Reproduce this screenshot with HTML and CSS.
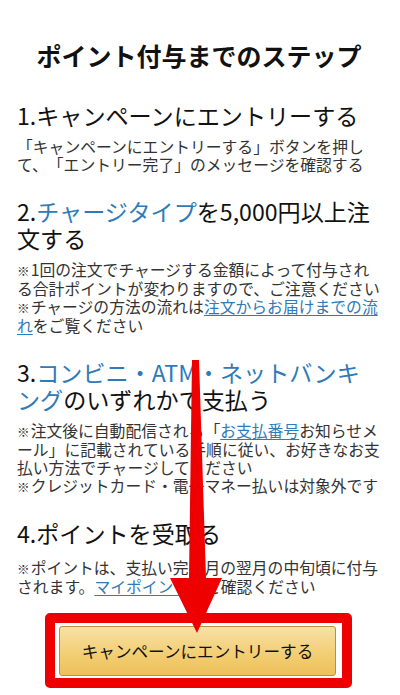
FILE: index.html
```html
<!DOCTYPE html>
<html lang="ja">
<head>
<meta charset="utf-8">
<title>ポイント付与までのステップ</title>
<link rel="stylesheet" href="styles.css">
</head>
<body>
<main class="page">
  <h1 class="title">ポイント付与までのステップ</h1>

  <section class="step">
    <h2 class="step-title">1.キャンペーンにエントリーする</h2>
    <p class="step-text">「キャンペーンにエントリーする」ボタンを押して、「エントリー完了」のメッセージを確認する</p>
  </section>

  <section class="step">
    <h2 class="step-title">2.<a class="hl" href="#">チャージタイプ</a>を5,000円以上注文する</h2>
    <p class="step-text"><span class="kome">※</span>1回の注文でチャージする金額によって付与される合計ポイントが変わりますので、ご注意ください</p>
    <p class="step-text"><span class="kome">※</span>チャージの方法の流れは<a class="link" href="#">注文からお届けまでの流れ</a>をご覧ください</p>
  </section>

  <section class="step">
    <h2 class="step-title">3.<a class="hl" href="#">コンビニ・ATM・ネットバンキング</a>のいずれかで支払う</h2>
    <p class="step-text"><span class="kome">※</span>注文後に自動配信される「<a class="link" href="#">お支払番号</a>お知らせメール」に記載されている手順に従い、お好きなお支払い方法でチャージしてください</p>
    <p class="step-text"><span class="kome">※</span>クレジットカード・電子マネー払いは対象外です</p>
  </section>

  <section class="step step-last">
    <h2 class="step-title">4.ポイントを受取る</h2>
    <p class="step-text"><span class="kome">※</span>ポイントは、支払い完了月の翌月の中旬頃に付与されます。<a class="link" href="#">マイポイント</a>でご確認ください</p>
  </section>

  <div class="cta-frame">
    <button class="cta" type="button">キャンペーンにエントリーする</button>
  </div>

  <svg class="arrow" width="400" height="695" viewBox="0 0 400 695" aria-hidden="true">
    <polygon points="192,360 199,360 206,578 222,578 197,633 170,578 189,578" fill="#ee0000"/>
  </svg>
</main>
</body>
</html>
```

FILE: styles.css
```css
html, body {
  margin: 0;
  padding: 0;
  background: #ffffff;
}

body {
  font-family: "Noto Sans CJK JP", "Noto Sans", sans-serif;
  color: #333333;
  text-spacing-trim: space-all;
}

.page {
  position: relative;
  width: 400px;
  height: 695px;
  box-sizing: border-box;
  padding: 39px 19px 0 17px;
  overflow: hidden;
  display: flex;
  flex-direction: column;
}

.title {
  margin: 0 0 31px 0;
  font-size: 25px;
  line-height: 32px;
  font-weight: 700;
  color: #111111;
  text-align: center;
}

.step {
  display: flex;
  flex-direction: column;
  margin-bottom: 24px;
}

.step-title {
  margin: 0 0 8px 0;
  font-size: 23.1px;
  line-height: 27.5px;
  font-weight: 400;
  color: #111111;
}

.step-last {
  margin-bottom: 17px;
}

.step-last .step-title {
  margin-bottom: 12px;
}

.step-text {
  margin: 0;
  font-size: 15.8px;
  line-height: 18px;
  color: #333333;
}

.kome {
  font-size: 0.8em;
  font-weight: 700;
  padding-right: 1px;
}

.hl {
  color: #2f7ab8;
  text-decoration: none;
}

.link {
  color: #2f7ab8;
  text-decoration: underline;
  text-underline-offset: 2px;
}

.cta-frame {
  align-self: flex-start;
  margin-left: 28px;
  border: 10px solid #ee0000;
  border-radius: 5px;
  padding: 3px 6px 2px 4px;
  background: #ffffff;
}

.cta {
  display: block;
  width: 277px;
  height: 50px;
  margin: 0;
  padding: 0;
  border: 1px solid #b8913c;
  border-radius: 3px;
  background: linear-gradient(to bottom, #f8e0a6 0%, #f2cd70 60%, #edc05a 100%);
  font-family: "Noto Sans CJK JP", "Noto Sans", sans-serif;
  font-size: 16.6px;
  color: #111111;
  text-align: center;
}

.arrow {
  position: absolute;
  top: 0;
  left: 0;
  pointer-events: none;
}
```
